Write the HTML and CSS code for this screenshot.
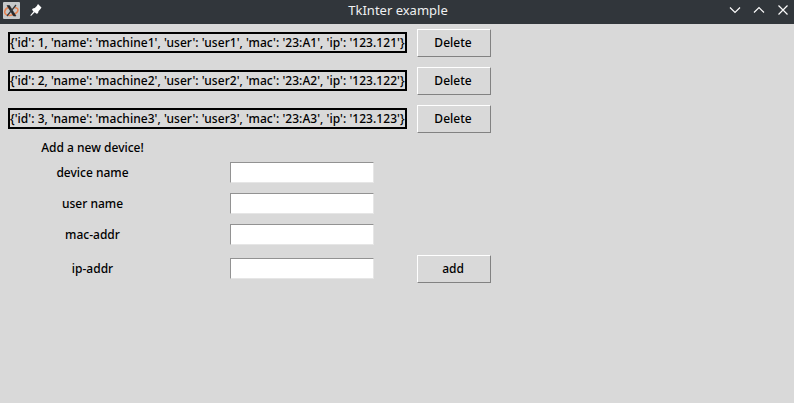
FILE: index.html
```html
<!DOCTYPE html>
<html lang="en">
<head>
<meta charset="utf-8">
<title>TkInter example</title>
<link rel="stylesheet" href="styles.css">
</head>
<body>
<header class="titlebar">
  <div class="left">
    <svg class="app-icon" width="17" height="17" viewBox="0 0 17 17">
      <rect width="17" height="17" rx="1" fill="#c6c9ca"/>
      <path d="M6 5C1 7 0 12 5 13.300 9 14 15 11 15 8 15 6 13 5.500 11.500 6" fill="none" stroke="#e9824f" stroke-width="1.500"/>
      <path d="M4 3.500h2.500L13 14h-2.500z" fill="#26292b" stroke="#26292b" stroke-width=".6"/>
      <path d="M13 3 4 14" stroke="#35393b" stroke-width="1.200"/>
    </svg>
    <svg class="pin" width="12" height="12" viewBox="0 0 12 12">
      <path d="M8 0 11.500 3.500 10.500 5 8.500 7.200 8 9.200 6.500 9.800 4.700 8.300 1 12 .3 11.300 3.500 7.400 2 5.800 2.800 4.500 4.800 4 6.800 2z" fill="#fff"/>
    </svg>
  </div>
  <h1 class="title">TkInter example</h1>
  <div class="controls">
    <svg width="12" height="12" viewBox="0 0 12 12"><path d="M1 3.500 6 8.500 11 3.500"/></svg>
    <svg width="12" height="12" viewBox="0 0 12 12"><path d="M1 8.500 6 3.500 11 8.500"/></svg>
    <svg width="12" height="12" viewBox="0 0 12 12"><path d="M1.500 1.500 10.500 10.500M10.500 1.500 1.500 10.500"/></svg>
  </div>
</header>
<main class="grid">
  <div class="record"><span>{'id': 1, 'name': 'machine1', 'user': 'user1', 'mac': '23:A1', 'ip': '123.121'}</span></div>
  <button class="button">Delete</button>
  <div class="record"><span>{'id': 2, 'name': 'machine2', 'user': 'user2', 'mac': '23:A2', 'ip': '123.122'}</span></div>
  <button class="button">Delete</button>
  <div class="record"><span>{'id': 3, 'name': 'machine3', 'user': 'user3', 'mac': '23:A3', 'ip': '123.123'}</span></div>
  <button class="button">Delete</button>
  <h2 class="label heading">Add a new device!</h2>
  <label class="label" for="device">device name</label>
  <input class="entry" id="device" type="text">
  <label class="label" for="user">user name</label>
  <input class="entry" id="user" type="text">
  <label class="label" for="mac">mac-addr</label>
  <input class="entry" id="mac" type="text">
  <label class="label" for="ip">ip-addr</label>
  <input class="entry last" id="ip" type="text">
  <button class="button">add</button>
</main>
</body>
</html>
```
FILE: styles.css
```css
* { box-sizing: border-box; }
body {
  margin: 0;
  height: 403px;
  overflow: hidden;
  background: #d9d9d9;
  color: #000;
  font: 500 12px/16px "Noto Sans", sans-serif;
}
.titlebar {
  display: grid;
  grid-template-columns: 1fr auto 1fr;
  align-items: center;
  height: 24px;
  padding: 0 5px 4px 3px;
  background: #31363b;
}
.left { display: flex; align-items: center; gap: 10px; }
.title {
  margin: 0;
  padding-left: 4px;
  color: #eff0f1;
  font-size: 13px;
  font-weight: 400;
  line-height: 20px;
}
.controls { display: flex; justify-content: flex-end; gap: 12px; }
.controls path { fill: none; stroke: #fcfcfc; stroke-width: 1.2; }
.grid {
  display: grid;
  grid-template-columns: 184px 228px 84px;
  grid-template-rows: 38px 38px 38px 19px 31px 31px 31px 38px;
  align-items: center;
}
.record {
  grid-column: 1 / 3;
  width: 399px;
  height: 21px;
  margin: 0 0 1px 8px;
  border: 2px solid #000;
  line-height: 17px;
  letter-spacing: 0.04px;
  white-space: nowrap;
}
.button {
  grid-column: 3;
  justify-self: center;
  width: 74px;
  height: 28px;
  padding: 0 2px 1px 0;
  border: 1px solid;
  border-color: #fff #828282 #828282 #fff;
  background: #d9d9d9;
  color: #000;
  font: inherit;
}
.label { grid-column: 1; padding-left: 1px; text-align: center; }
.heading { margin: 0; font: inherit; grid-row: 4; }
.entry {
  grid-column: 2;
  width: 144px;
  height: 21px;
  margin-left: 46px;
  padding: 0 2px;
  border: 1px solid;
  border-color: #929292 #e6e6e6 #e6e6e6 #929292;
  background: #fff;
  font: inherit;
}
.entry.last { margin-bottom: 1px; }
```
